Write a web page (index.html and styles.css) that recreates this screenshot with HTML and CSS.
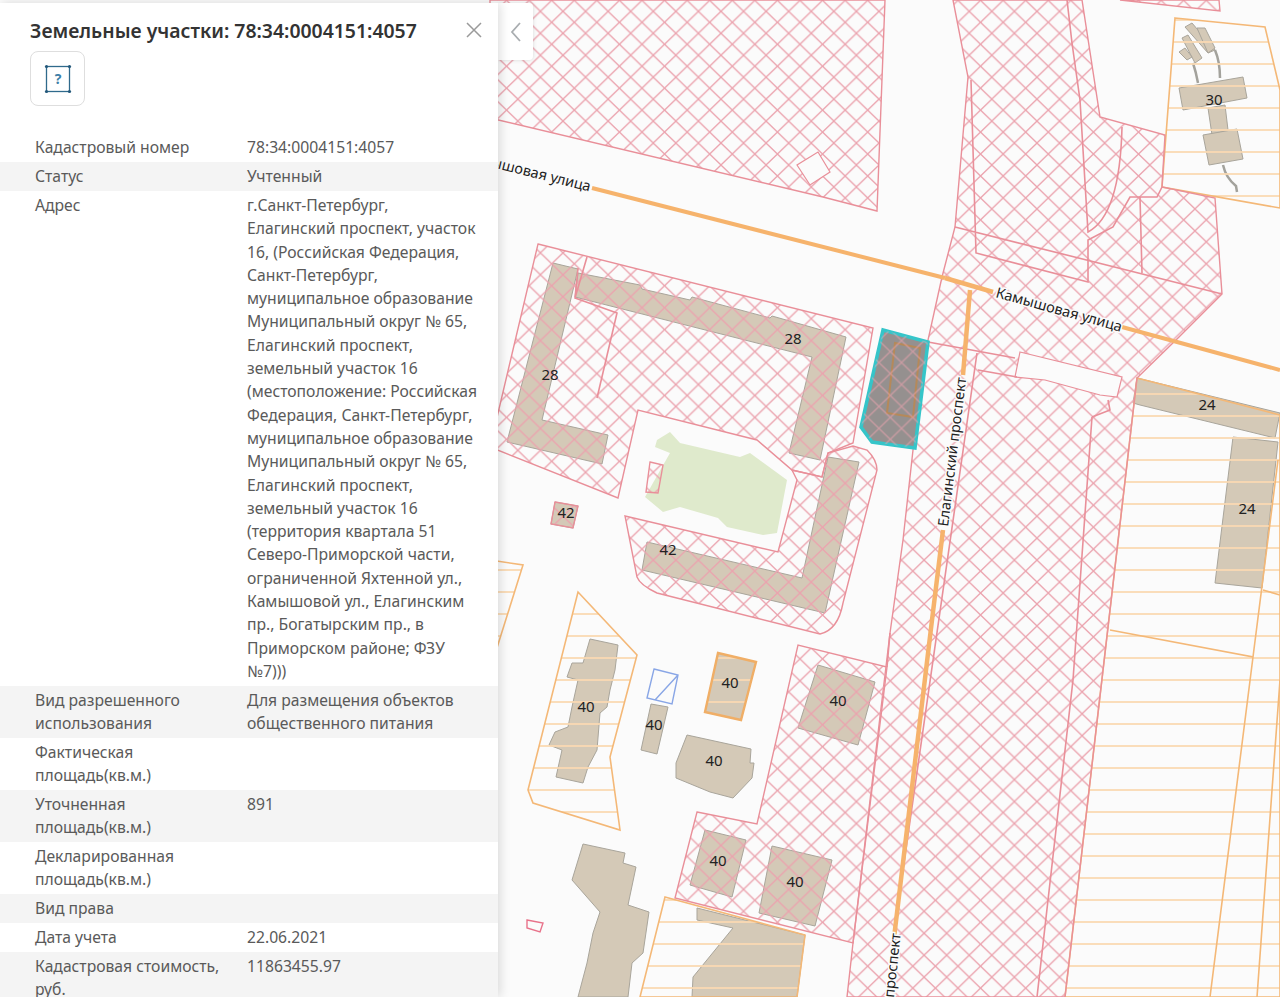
FILE: index.html
```html
<!DOCTYPE html>
<html lang="ru">
<head>
  <meta charset="UTF-8">
  <title>Земельные участки: 78:34:0004151:4057</title>
  <link rel="stylesheet" href="styles.css">
</head>
<body>
  <div class="page">
    <!-- Карта -->
    <svg class="map" viewBox="0 0 1280 997" width="1280" height="997">
      <defs>
        <pattern id="cross" patternUnits="userSpaceOnUse" width="22.57" height="21.95" patternTransform="translate(630.7 33.3)">
          <path d="M-1.13 -1.1L23.7 23.05M-1.13 23.05L23.7 -1.1" stroke="#eba3ae" stroke-width="1.3" fill="none"/>
        </pattern>
        <pattern id="lines" patternUnits="userSpaceOnUse" width="22" height="22">
          <path d="M0 20H22" stroke="#fad9b2" stroke-width="1.8" fill="none"/>
        </pattern>
      </defs>

      <!-- Зелень -->
      <polygon class="green" points="657,440 670,432 680,443 740,457 750,453 787,480 777,533 763,535 727,527 718,518 680,507 663,512 645,497 670,453 655,447"/>

      <!-- Здания -->
      <g class="buildings">
        <polygon points="553,263 578,269 542,420 608,435 602,464 507,442"/>
        <polygon points="578,273 640,285 642,289 690,300 692,297 770,318 772,316 846,337 820,460 789,453 812,357 575,297"/>
        <polygon points="859,462 825,613 642,570 647,542 802,578 828,457"/>
        <polygon points="555,502 578,506 573,528 551,524"/>
        <polygon points="590,639 618,645 615,670 610,690 607,707 600,713 597,750 588,767 583,783 556,777 562,750 549,745 555,732 568,727 572,707 578,680 567,677 572,663 583,663"/>
        <polygon points="651,704 668,707 657,754 641,750"/>
        <polygon points="718,653 756,662 741,720 705,712"/>
        <polygon points="687,735 751,749 750,763 754,763 752,778 733,798 710,792 676,778 676,763"/>
        <polygon points="818,665 875,682 858,745 798,728"/>
        <polygon points="705,830 746,840 732,897 690,885"/>
        <polygon points="772,846 832,860 815,926 759,913"/>
        <polygon points="583,844 625,853 623,863 636,867 628,905 649,912 643,953 632,963 628,997 578,997 587,963 593,933 600,912 572,880"/>
        <polygon points="697,908 805,935 797,997 692,997 693,977 733,928 697,920"/>
        <polygon points="1137,378 1280,413 1275,438 1140,405 1133,403"/>
        <polygon points="1233,437 1278,442 1262,588 1215,583"/>
        <polygon points="1179,88 1243,77 1247,98 1183,110"/>
        <polygon points="1208,108 1225,105 1228,130 1212,135"/>
        <polygon points="1203,135 1237,129 1243,159 1209,165"/>
        <polygon points="1185,27 1192,23 1215,50 1208,53"/>
        <polygon points="1197,28 1205,28 1215,48 1208,53"/>
        <polygon points="1182,38 1188,35 1202,58 1195,63"/>
        <polygon points="1179,52 1185,48 1192,57 1187,60"/>
      </g>
      <path class="wire" d="M1193 63Q1196 72 1198 83M1215 50Q1220 62 1220 78M1223 165Q1226 178 1236 186L1237 192"/>

      <!-- Участки: оранжевая штриховка -->
      <g class="zone-orange" fill="url(#lines)">
        <polygon points="1175,18 1265,27 1280,90 1280,208 1162,187"/>
        <polygon points="1137,378 1280,415 1280,997 1065,997"/>
        <polygon points="578,592 637,655 610,757 620,830 533,803 528,790"/>
        <polygon points="490,560 523,565 490,670"/>
        <polygon points="665,897 805,935 797,997 640,997"/>
        <polygon class="thick" points="718,653 756,662 741,720 705,712"/>
      </g>
      <path class="orange-line" d="M1110 630L1253 657L1210 997M1278 460L1253 657M1263 590L1280 595M1280 680L1257 997"/>

      <!-- Участки: розовая штриховка -->
      <g class="zone-pink" fill="url(#cross)">
        <polygon points="490,118 823,197 877,211 885,0 490,0"/>
        <polygon points="953,0 968,77 955,227 942,277 928,340 913,450 903,540 890,633 853,943 847,997 1065,997 1137,378 1178,338 1222,294 1215,198 1162,187 1165,135 1100,117 1082,0"/>
        <polygon points="538,244 873,328 853,443 828,453 822,477 792,470 757,440 638,410 618,498 490,447"/>
        <path d="M625 516L778 552L797 480L792 470L822 477L828 453L853 446L867 450Q877 460 877 470L843 603Q838 630 820 634L657 593Q640 585 637 577Z"/>
        <polygon points="697,812 757,824 798,645 887,667 853,943 675,898"/>
        <polygon points="650,462 663,465 658,493 646,492"/>
        <polygon points="555,502 578,506 573,528 551,524"/>
        <polygon points="1120,0 1220,11 1219,0"/>
      </g>
      <polygon class="clear" points="818,152 830,172 810,185 797,165"/>
      <polygon class="clear" points="1020,352 1122,377 1117,397 1100,395 1045,380 1015,377"/>
      <polygon class="clear-pink" points="527,920 543,923 540,932 527,928"/>
      <path class="pink-line" d="M587 257L575 298L617 313L597 398M575 298L578 268M1067 0L1072 43L1080 100L1088 232Q1120 215 1122 127M971 80L976 253L1088 282L1088 240L1113 227L1130 197L1157 197L1162 187M1140 197L1142 273M955 227L1222 294M928 342L1015 358M978 370L1017 377M977 353L893 940M1092 417L1110 410L1108 400M1092 417L1073 680L1037 997M890 633L887 667"/>

      <!-- Дороги -->
      <path class="road" d="M592 188L945 278M1122 327L1280 370"/>
      <path class="road wide" d="M945 278L993 292M970 290L963 375M932 620L943 530M932 620L894 938"/>

      <!-- Голубой квадрат -->
      <path class="blue" d="M654 669L678 675L672 704L647 698ZM678 675L655 700"/>

      <!-- Выбранный участок -->
      <polygon class="selected" points="883,330 928,342 915,448 872,442 861,427"/>
      <polygon class="selected-inner" points="895,343 920,348 913,417 887,413"/>
      <polygon class="selected-hatch" fill="url(#cross)" points="883,330 928,342 915,448 872,442 861,427"/>

      <!-- Подписи -->
      <g class="labels">
        <text x="793" y="344">28</text>
        <text x="550" y="380">28</text>
        <text x="566" y="518">42</text>
        <text x="668" y="555">42</text>
        <text x="586" y="712">40</text>
        <text x="654" y="730">40</text>
        <text x="730" y="688">40</text>
        <text x="714" y="766">40</text>
        <text x="838" y="706">40</text>
        <text x="718" y="866">40</text>
        <text x="795" y="887">40</text>
        <text x="1214" y="105">30</text>
        <text x="1207" y="410">24</text>
        <text x="1247" y="514">24</text>
      </g>
      <g class="streets">
        <text transform="translate(995,297) rotate(15.5)">Камышовая улица</text>
        <text transform="translate(948,527) rotate(-83)">Елагинский проспект</text>
        <text transform="translate(463,160) rotate(14)">Камышовая улица</text>
        <text transform="translate(885,1083) rotate(-84)">Елагинский проспект</text>
      </g>
    </svg>

    <!-- Кнопка сворачивания -->
    <div class="toggle">
      <svg width="14" height="22" viewBox="0 0 14 22"><path d="M11 2L3 11L11 20" fill="none" stroke="#a9adb0" stroke-width="1.8"/></svg>
    </div>

    <!-- Панель информации -->
    <aside class="panel">
      <div class="panel-head">
        <h1 class="panel-title">Земельные участки: 78:34:0004151:4057</h1>
        <svg class="close" width="18" height="18" viewBox="0 0 18 18"><path d="M2 2L16 16M16 2L2 16" fill="none" stroke="#9a9a9a" stroke-width="1.5"/></svg>
      </div>
      <div class="icon-btn">
        <svg width="28" height="30" viewBox="0 0 28 30">
          <rect x="2.5" y="2.5" width="23" height="25" fill="none" stroke="#2f6a8c" stroke-width="1.3"/>
          <g fill="#23587a">
            <circle cx="2.5" cy="2.5" r="1.6"/><circle cx="25.5" cy="2.5" r="1.6"/>
            <circle cx="2.5" cy="27.5" r="1.6"/><circle cx="25.5" cy="27.5" r="1.6"/>
          </g>
          <text x="14" y="20" class="icon-q">?</text>
        </svg>
      </div>

      <table class="info">
        <tr><td>Кадастровый номер</td><td>78:34:0004151:4057</td></tr>
        <tr><td>Статус</td><td>Учтенный</td></tr>
        <tr>
          <td class="address">Адрес</td>
          <td class="address">г.Санкт-Петербург,<br>Елагинский проспект, участок<br>16, (Российская Федерация,<br>Санкт-Петербург,<br>муниципальное образование<br>Муниципальный округ № 65,<br>Елагинский проспект,<br>земельный участок 16<br>(местоположение: Российская<br>Федерация, Санкт-Петербург,<br>муниципальное образование<br>Муниципальный округ № 65,<br>Елагинский проспект,<br>земельный участок 16<br>(территория квартала 51<br>Северо-Приморской части,<br>ограниченной Яхтенной ул.,<br>Камышовой ул., Елагинским<br>пр., Богатырским пр., в<br>Приморском районе; ФЗУ<br>№7)))</td>
        </tr>
        <tr><td>Вид разрешенного<br>использования</td><td>Для размещения объектов<br>общественного питания</td></tr>
        <tr><td>Фактическая<br>площадь(кв.м.)</td><td></td></tr>
        <tr><td>Уточненная<br>площадь(кв.м.)</td><td>891</td></tr>
        <tr><td>Декларированная<br>площадь(кв.м.)</td><td></td></tr>
        <tr><td>Вид права</td><td></td></tr>
        <tr><td>Дата учета</td><td>22.06.2021</td></tr>
        <tr><td>Кадастровая стоимость,<br>руб.</td><td>11863455.97</td></tr>
      </table>
    </aside>
  </div>
</body>
</html>
```

FILE: styles.css
```css
* {
  margin: 0;
  padding: 0;
  box-sizing: border-box;
}

body {
  background: #fbfbfb;
  font-family: "Noto Sans", "Open Sans", sans-serif;
  overflow: hidden;
}

.page {
  position: relative;
  width: 1280px;
  height: 997px;
  overflow: hidden;
}

/* Карта */
.map {
  position: absolute;
  top: 0;
  left: 0;
  display: block;
}

.green { fill: #dfeacc; }

.buildings polygon {
  fill: #d4c9b7;
  stroke: #a9a59b;
  stroke-width: 1;
}

.wire {
  fill: none;
  stroke: #a3a29c;
  stroke-width: 2.5;
}

.zone-orange polygon {
  stroke: #f4b877;
  stroke-width: 1.6;
}

.zone-orange .thick { stroke-width: 2.4; stroke: #f0ae66; }

.orange-line {
  fill: none;
  stroke: #f4b877;
  stroke-width: 1.6;
}

.zone-pink polygon,
.zone-pink path {
  stroke: #e98f99;
  stroke-width: 1.4;
}

.clear {
  fill: #fbfbfb;
  stroke: #e98f99;
  stroke-width: 1.2;
}

.clear-pink {
  fill: #fbfbfb;
  stroke: #e8728a;
  stroke-width: 1.4;
}

.pink-line {
  fill: none;
  stroke: #e98f99;
  stroke-width: 1.6;
}

.road {
  fill: none;
  stroke: #f6b36c;
  stroke-width: 4;
}

.road.wide {
  stroke-width: 4.5;
}

.blue {
  fill: none;
  stroke: #89a6e6;
  stroke-width: 1.4;
}

.selected {
  fill: #95908f;
  stroke: #35c5c9;
  stroke-width: 3.5;
}

.selected-inner {
  fill: none;
  stroke: #b5895a;
  stroke-width: 2;
}

.selected-hatch {
  stroke: none;
  opacity: 0.6;
}

.labels text {
  font-family: "Noto Sans", sans-serif;
  font-size: 15px;
  fill: #222;
  text-anchor: middle;
}

.streets text {
  font-family: "Noto Sans", sans-serif;
  font-size: 14.5px;
  fill: #222;
  stroke: #fbfbfb;
  stroke-width: 3px;
  paint-order: stroke;
}

/* Кнопка сворачивания */
.toggle {
  position: absolute;
  top: 3px;
  left: 498px;
  width: 35px;
  height: 57px;
  display: flex;
  align-items: center;
  justify-content: center;
  background: #fff;
  border-radius: 0 4px 4px 0;
  box-shadow: 0 0 4px rgba(0, 0, 0, 0.15);
}

/* Панель информации */
.panel {
  position: absolute;
  top: 3px;
  left: 0;
  width: 498px;
  height: 994px;
  background: #fff;
  box-shadow: 2px 0 10px rgba(0, 0, 0, 0.14);
  overflow: hidden;
}

.panel-head {
  display: flex;
  align-items: center;
  justify-content: space-between;
  padding: 10px 15px 0 30px;
  height: 44px;
}

.panel-title {
  font-size: 19.4px;
  font-weight: 600;
  color: #333;
  white-space: nowrap;
}

.icon-btn {
  width: 55px;
  height: 55px;
  margin: 4px 0 0 30px;
  display: flex;
  align-items: center;
  justify-content: center;
  border: 1px solid #dedede;
  border-radius: 8px;
}

.icon-q {
  font-size: 14px;
  font-weight: 700;
  fill: #3e7fa8;
  text-anchor: middle;
}

/* Таблица атрибутов */
.info {
  width: 100%;
  margin-top: 27px;
  border-collapse: collapse;
  table-layout: fixed;
  font-size: 15.7px;
  line-height: 23px;
  color: #5a5a5a;
}

.info td {
  padding: 3px 0;
  vertical-align: top;
  white-space: nowrap;
}

.info td.address {
  line-height: 23.3px;
}

.info td:first-child {
  width: 247px;
  padding-left: 35px;
}

.info tr:nth-child(even) {
  background: #f4f4f4;
}
```
